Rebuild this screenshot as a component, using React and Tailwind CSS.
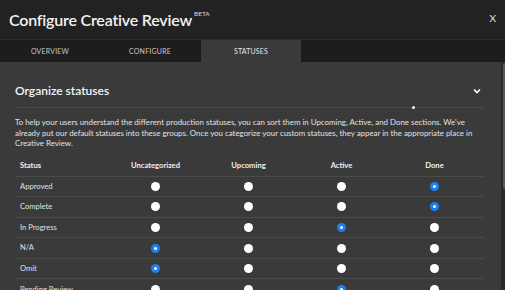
import React from "react";

const rows = [
  ["Approved", 3],
  ["Complete", 3],
  ["In Progress", 2],
  ["N/A", 0],
  ["Omit", 0],
  ["Pending Review", 2],
];

function Radio({ on }) {
  return on ? (
    <div className="w-[9px] h-[9px] rounded-full bg-[#1d7ff0] flex items-center justify-center">
      <div className="w-[3px] h-[3px] rounded-full bg-white" />
    </div>
  ) : (
    <div className="w-[9px] h-[9px] rounded-full bg-white" />
  );
}

export default function App() {
  return (
    <div className="w-[505px] h-[290px] overflow-hidden flex flex-col bg-[#3a3a3a] text-white" style={{ fontFamily: "Lato, 'Noto Sans', sans-serif" }}>
      <div className="h-[40px] shrink-0 bg-[#222222] border-b border-[#2e2e2e] flex items-center justify-between pl-[9px] pr-[9px]">
        <div className="flex items-start">
          <span className="text-[16px] font-semibold tracking-[-0.2px] text-[#f2f2f2] leading-none">Configure Creative Review</span>
          <span className="text-[6.5px] ml-[2px] -mt-[1px] text-[#ddd] leading-none">BETA</span>
        </div>
        <span className="text-[10px] text-[#e6e6e6] leading-none -mt-[4px]">X</span>
      </div>
      <div className="h-[22px] shrink-0 bg-[#1d1d1d] flex">
        {["OVERVIEW", "CONFIGURE", "STATUSES"].map((t, i) => (
          <div key={t} className={`w-[100px] flex items-center justify-center text-[7px] tracking-[0.2px] ${i === 2 ? "bg-[#3a3a3a] text-[#e8e8e8] ml-[1px]" : "text-[#c8c8c8]"}`}>
            {t}
          </div>
        ))}
      </div>
      <div className="flex-1 flex min-h-0">
        <div className="flex-1 pl-[15px] pr-[17px]">
          <div className="h-[46px] flex items-center justify-between border-b border-[#4a4a4a] relative pr-[3px]">
            <span className="text-[12px] font-semibold text-[#f4f4f4] mt-[13px]">Organize statuses</span>
            <svg width="8" height="6" viewBox="0 0 8 6" className="mt-[12px]">
              <path d="M1 1.5 L4 4.5 L7 1.5" stroke="#fff" strokeWidth="1.6" fill="none" />
            </svg>
            <div className="absolute left-[397px] bottom-[-2px] w-[3px] h-[3px] rounded-full bg-white" />
          </div>
          <p className="mt-[9px] text-[7.9px] leading-[10.5px] text-[#e2e2e2] w-[462px]">
            To help your users understand the different production statuses, you can sort them in Upcoming, Active, and Done sections. We've already put our default statuses into these groups. Once you categorize your custom statuses, they appear in the appropriate place in Creative Review.
          </p>
          <div className="mt-[8px] w-[469px] text-[7.6px]">
            <div className="h-[20px] grid grid-cols-[94px_93px_93px_93px_93px] items-center border-b border-[#4a4a4a] font-bold text-[#f0f0f0]">
              <span className="pl-[5px]">Status</span>
              <span className="text-center">Uncategorized</span>
              <span className="text-center">Upcoming</span>
              <span className="text-center">Active</span>
              <span className="text-center">Done</span>
            </div>
            {rows.map(([name, sel]) => (
              <div key={name} className="h-[20.6px] grid grid-cols-[94px_93px_93px_93px_93px] items-center border-b border-[#4a4a4a] text-[#e0e0e0]">
                <span className="pl-[5px]">{name}</span>
                {[0, 1, 2, 3].map((c) => (
                  <div key={c} className="flex justify-center">
                    <Radio on={c === sel} />
                  </div>
                ))}
              </div>
            ))}
          </div>
        </div>
        <div className="w-[8px] shrink-0 bg-[#2b2b2b] pt-[1px] flex justify-center">
          <div className="w-[5px] h-[126px] rounded-[2px] bg-[#5a5a5a]" />
        </div>
      </div>
    </div>
  );
}
